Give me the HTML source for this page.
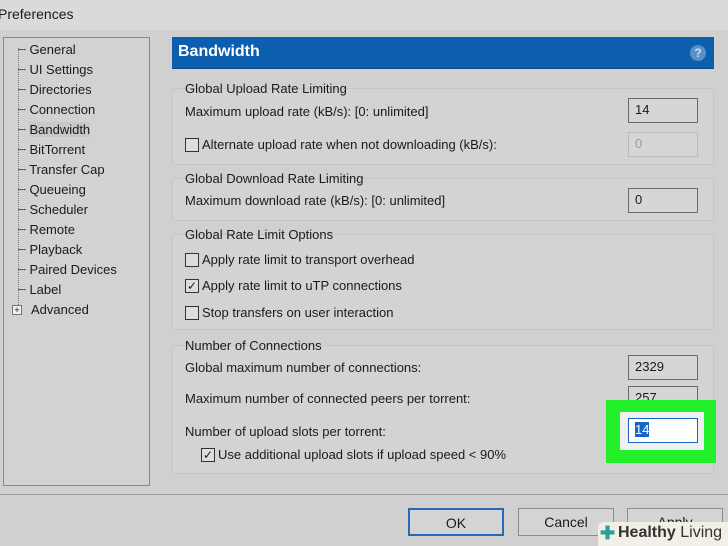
<!DOCTYPE html>
<html><head><style>
body{margin:0;width:728px;height:546px;overflow:hidden;background:#d0d0d0;font-family:"Liberation Sans",sans-serif;font-size:13px;color:#1a1a1a;position:relative}
.a{position:absolute;white-space:nowrap}
.tb{position:absolute;left:0;top:0;width:728px;height:30px;background:#dadada}
.tree{position:absolute;left:3px;top:37px;width:145px;height:447px;border:1px solid #8a8a8a;background:#d2d2d2}
.grp{position:absolute;left:172px;width:540px;border:1px solid #c6c6c6;background:#d3d3d3;border-radius:2px}
.in{position:absolute;left:628px;border:1px solid #6a6a6a;background:#d6d6d6;line-height:22px;padding-left:6px;box-sizing:border-box;width:70px;height:25px}
.cb{position:absolute;width:12px;height:12px;border:1px solid #333;background:#ddd}
.btn{position:absolute;top:508px;width:94px;height:26px;border:1px solid #8c8c8c;background:#d4d4d4;text-align:center;line-height:26px;font-size:14px}
</style></head><body>
<div class="tb"></div>
<div class="a" style="left:-2px;top:6px;font-size:14px">Preferences</div>
<div class="tree"></div>
<div class="a" style="left:18px;top:48px;height:265px;border-left:1px dotted #777"></div>
<div class="a" style="left:18px;top:40px;font-size:13px;line-height:20px">
<div>┈ General</div><div>┈ UI Settings</div><div>┈ Directories</div><div>┈ Connection</div><div>┈ <span style="background:#c8c8c8">Bandwidth</span></div><div>┈ BitTorrent</div><div>┈ Transfer Cap</div><div>┈ Queueing</div><div>┈ Scheduler</div><div>┈ Remote</div><div>┈ Playback</div><div>┈ Paired Devices</div><div>┈ Label</div></div>
<div class="a" style="left:12px;top:305px;width:8px;height:8px;border:1px solid #777;background:#eee;font-size:9px;line-height:8px;text-align:center">+</div>
<div class="a" style="left:31px;top:302px">Advanced</div>
<div class="a" style="left:172px;top:37px;width:542px;height:31px;background:#0c5fae;border-bottom:1px solid #0a4a88"></div>
<div class="a" style="left:178px;top:43px;color:#fff;font-weight:bold;font-size:16px">Bandwidth</div>
<div class="a" style="left:690px;top:45px;width:16px;height:16px;border-radius:50%;background:#5b8fc8;color:#dde;font-size:12px;text-align:center;line-height:16px;font-weight:bold">?</div>
<div class="grp" style="top:88px;height:75px"></div>
<div class="grp" style="top:178px;height:41px"></div>
<div class="grp" style="top:234px;height:94px"></div>
<div class="grp" style="top:345px;height:127px"></div>
<div class="a" style="left:185px;top:81px">Global Upload Rate Limiting</div>
<div class="a" style="left:185px;top:104px">Maximum upload rate (kB/s): [0: unlimited]</div>
<div class="in" style="top:98px">14</div>
<div class="cb" style="left:185px;top:138px"></div>
<div class="a" style="left:202px;top:137px">Alternate upload rate when not downloading (kB/s):</div>
<div class="in" style="top:132px;border-color:#bbb;color:#999">0</div>
<div class="a" style="left:185px;top:171px">Global Download Rate Limiting</div>
<div class="a" style="left:185px;top:193px">Maximum download rate (kB/s): [0: unlimited]</div>
<div class="in" style="top:188px">0</div>
<div class="a" style="left:185px;top:227px">Global Rate Limit Options</div>
<div class="cb" style="left:185px;top:253px"></div><div class="a" style="left:202px;top:252px">Apply rate limit to transport overhead</div>
<div class="cb" style="left:185px;top:279px;font-size:12px;line-height:12px;text-align:center">✓</div><div class="a" style="left:202px;top:278px">Apply rate limit to uTP connections</div>
<div class="cb" style="left:185px;top:306px"></div><div class="a" style="left:202px;top:305px">Stop transfers on user interaction</div>
<div class="a" style="left:185px;top:338px">Number of Connections</div>
<div class="a" style="left:185px;top:360px">Global maximum number of connections:</div>
<div class="in" style="top:355px">2329</div>
<div class="a" style="left:185px;top:391px">Maximum number of connected peers per torrent:</div>
<div class="in" style="top:386px">257</div>
<div class="a" style="left:185px;top:424px">Number of upload slots per torrent:</div>
<div class="cb" style="left:201px;top:448px;font-size:12px;line-height:12px;text-align:center">✓</div><div class="a" style="left:218px;top:447px">Use additional upload slots if upload speed &lt; 90%</div>
<div class="a" style="left:606px;top:400px;width:110px;height:63px;background:#22ee2a"></div>
<div class="a" style="left:620px;top:412px;width:84px;height:38px;background:#f0f0f0"></div>
<div class="a" style="left:628px;top:418px;width:70px;height:25px;border:1px solid #1a64c8;background:#fff;box-sizing:border-box"><span style="position:absolute;left:6px;top:3px;background:#1a64c8;color:#fff">14</span></div>
<div class="a" style="left:0;top:494px;width:728px;height:1px;background:#a0a0a0"></div>
<div class="btn" style="left:408px;border:2px solid #2a6ab4;height:24px;width:92px">OK</div>
<div class="btn" style="left:518px">Cancel</div>
<div class="btn" style="left:627px">Apply</div>
<div class="a" style="left:598px;top:522px;width:130px;height:24px;background:#f2efe6;border-radius:6px 0 0 0"></div>
<div class="a" style="left:600px;top:523px;color:#2aa19a;font-size:18px;font-weight:bold">✚</div>
<div class="a" style="left:618px;top:524px;font-size:16px;color:#333"><b>Healthy</b> Living</div>
</body></html>
